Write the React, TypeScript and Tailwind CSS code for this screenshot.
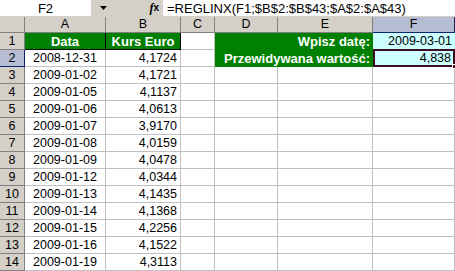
import React from 'react';

const rows: [string, string][] = [
  ['2008-12-31', '4,1724'],
  ['2009-01-02', '4,1721'],
  ['2009-01-05', '4,1137'],
  ['2009-01-06', '4,0613'],
  ['2009-01-07', '3,9170'],
  ['2009-01-08', '4,0159'],
  ['2009-01-09', '4,0478'],
  ['2009-01-12', '4,0344'],
  ['2009-01-13', '4,1435'],
  ['2009-01-14', '4,1368'],
  ['2009-01-15', '4,2256'],
  ['2009-01-16', '4,1522'],
  ['2009-01-19', '4,3113'],
];

const cols = ['A', 'B', 'C', 'D', 'E', 'F'];

const cell = 'h-[17px] border-r border-b border-[#c0c0c0] bg-white px-[3px] flex items-center';
const rowHead = 'h-[17px] border-r border-b border-[#808080] bg-[#d4d0c8] flex items-center justify-center';

const App: React.FC = () => {
  return (
    <div className="w-[455px] h-[271px] overflow-hidden bg-white text-[12.5px] text-black font-['Liberation_Sans',Arial,sans-serif] leading-none">
      {/* formula bar */}
      <div className="flex h-[17px] bg-[#d4d0c8]">
        <div className="w-[91px] h-[16px] bg-white flex items-center justify-center text-[13px]">F2</div>
        <div className="w-[24px] h-[16px] flex items-center justify-center">
          <svg width="7" height="4" viewBox="0 0 7 4">
            <path d="M0 0h7L3.5 4z" fill="#000" />
          </svg>
        </div>
        <div className="w-[48px] h-[16px] flex items-center justify-end pr-[4px] italic font-['Liberation_Serif',serif] text-[12px] font-bold">
          f<span className="text-[10px] not-italic font-['Liberation_Sans',sans-serif]">x</span>
        </div>
        <div className="flex-1 h-[16px] bg-white flex items-center pl-[4px] text-[13px] whitespace-nowrap">
          =REGLINX(F1;$B$2:$B$43;$A$2:$A$43)
        </div>
      </div>

      <div className="grid grid-cols-[25px_81px_75px_34px_63px_95px_1fr]">
        {/* column headers */}
        <div className="h-[16px] bg-[#d4d0c8] border-r border-b border-[#808080]" />
        {cols.map((c) => (
          <div
            key={c}
            className={
              c === 'F'
                ? 'h-[16px] bg-[#b6bdd2] border-r border-b border-[#0a246a] flex items-center justify-center'
                : 'h-[16px] bg-[#d4d0c8] border-r border-b border-[#808080] flex items-center justify-center'
            }
          >
            {c}
          </div>
        ))}

        {/* row 1 */}
        <div className={rowHead}>1</div>
        <div className="h-[17px] bg-[#008000] border-r border-b border-black flex items-center justify-center font-bold text-[13px] text-white">Data</div>
        <div className="h-[17px] bg-[#008000] border-r border-b border-black flex items-center justify-center font-bold text-[13px] text-white">Kurs Euro</div>
        <div className={cell} />
        <div className="col-span-2 row-span-2 bg-[#008000] flex flex-col font-bold text-[13px] text-white">
          <div className="h-[17px] flex items-center justify-end pr-[3px]">Wpisz datę:</div>
          <div className="h-[17px] flex items-center justify-end pr-[3px]">Przewidywana wartość:</div>
        </div>
        <div className="h-[17px] bg-[#ccffff] border-b border-[#c0c0c0] flex items-center justify-end pr-[3px]">2009-03-01</div>

        {rows.map(([d, v], i) => {
          const n = i + 2;
          return (
            <React.Fragment key={n}>
              <div
                className={
                  n === 2
                    ? 'h-[17px] border-r border-b border-[#0a246a] bg-[#b6bdd2] flex items-center justify-center'
                    : rowHead
                }
              >
                {n}
              </div>
              <div className={`${cell} justify-center`}>{d}</div>
              <div className={`${cell} justify-end`}>{v}</div>
              <div className={cell} />
              {n !== 2 && <div className={cell} />}
              {n !== 2 && <div className={cell} />}
              {n === 2 ? (
                <div className="relative h-[17px] bg-[#ccffff] border-b border-[#c0c0c0]">
                  <div className="absolute inset-x-0 -top-px -bottom-px border-2 border-[#3c0a1e] flex items-center justify-end pr-[2px]">
                    4,838
                  </div>
                  <div className="absolute right-[-2px] bottom-[-3px] w-[5px] h-[5px] bg-[#3c0a1e] border border-white" />
                </div>
              ) : (
                <div className={cell} />
              )}
            </React.Fragment>
          );
        })}
      </div>
    </div>
  );
};

export default App;
